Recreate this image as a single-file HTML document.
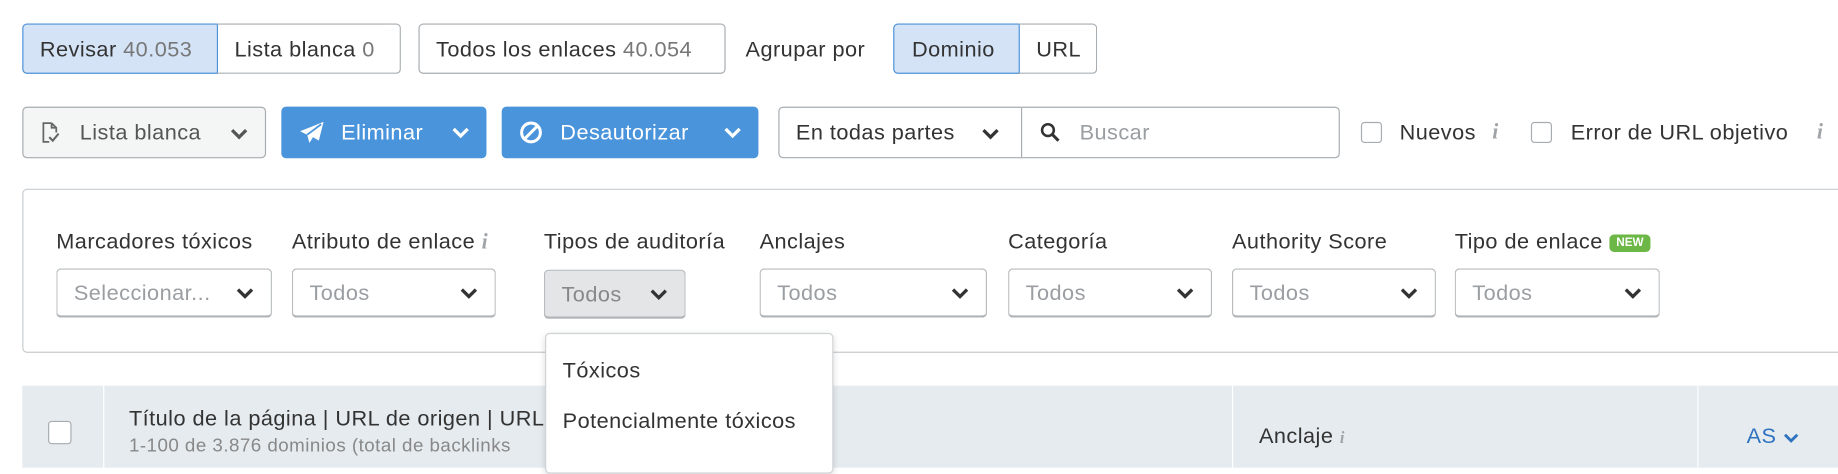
<!DOCTYPE html>
<html><head><meta charset="utf-8"><style>
*{box-sizing:border-box;margin:0;padding:0}
body{width:1838px;height:456px;overflow:hidden;background:#fff;font-family:"Liberation Sans",sans-serif;color:#333;position:relative}
#w{position:absolute;left:0;top:0;width:1568px;height:390px;transform:scale(1.1722);transform-origin:0 0;font-size:18.5px;letter-spacing:.4px}
.a{position:absolute;white-space:nowrap}
.b{position:absolute;border:1px solid #a6acb0;border-radius:4px;display:flex;align-items:center;white-space:nowrap}
.n{color:#777}
.blue{background:#4a94dc;color:#fff;border:none}
.sel{background:#d4e4f6;border-color:#4a90d9}
.lab{position:absolute;top:195px;white-space:nowrap}
.dd{position:absolute;top:229px;height:42px;border:1px solid #b7bbbe;border-radius:4px;color:#9a9ea2;padding-left:14px;display:flex;align-items:center;border-bottom:2px solid #b0b4b7}
.dd svg,.b .c{position:absolute;right:14px;top:15px}
.b .c{top:17px}
.cb{position:absolute;width:18px;height:18px;border:1px solid #a6acb0;border-radius:3px;background:#fff}
.i{color:#a0a4a8;font-family:"Liberation Serif",serif;font-style:italic;font-weight:bold}
</style></head><body>
<svg width="0" height="0" style="position:absolute"><defs><symbol id="ch" viewBox="0 0 16 10"><path d="M2 2l6 6 6-6" fill="none" stroke="currentColor" stroke-width="2.8"/></symbol></defs></svg>
<div id="w">
<div class="b sel" style="left:19px;top:20px;width:167px;height:43px;padding-left:14px;border-radius:4px 0 0 4px">Revisar&nbsp;<span class="n">40.053</span></div>
<div class="b" style="left:185px;top:20px;width:157px;height:43px;padding-left:15px;border-left:none;border-radius:0 4px 4px 0">Lista blanca&nbsp;<span class="n">0</span></div>
<div class="b" style="left:357px;top:20px;width:262px;height:43px;padding-left:14px">Todos los enlaces&nbsp;<span class="n">40.054</span></div>
<div class="a" style="left:636px;top:31px">Agrupar por</div>
<div class="b sel" style="left:762px;top:20px;width:108px;height:43px;padding-left:15px;border-radius:4px 0 0 4px">Dominio</div>
<div class="b" style="left:869px;top:20px;width:67px;height:43px;padding-left:15px;border-left:none;border-radius:0 4px 4px 0">URL</div>

<div class="b" style="left:19px;top:91px;width:208px;height:44px;background:#f4f5f5;padding-left:14px;color:#555">
<svg width="18" height="20" viewBox="0 0 18 20"><path d="M10 2H3v16h5M10 2l4 4v4M10 2v4h4" fill="none" stroke="#666" stroke-width="1.5"/><path d="M8 14l3 3 5-6" fill="none" stroke="#666" stroke-width="1.8"/></svg>
<span style="margin-left:16px">Lista blanca</span><svg class="c" width="16" height="10" style="color:#555"><use href="#ch"/></svg></div>
<div class="b blue" style="left:240px;top:91px;width:175px;height:44px;padding-left:15px">
<svg width="22" height="20" viewBox="0 0 22 20"><path d="M21 1L1 9l6 3 2 7 3-5 5 3z" fill="#fff"/><path d="M7 12L19 3" stroke="#4a94dc" stroke-width="1.5"/></svg>
<span style="margin-left:14px">Eliminar</span><svg class="c" width="16" height="10" style="color:#fff"><use href="#ch"/></svg></div>
<div class="b blue" style="left:428px;top:91px;width:219px;height:44px;padding-left:15px">
<svg width="20" height="20" viewBox="0 0 20 20"><circle cx="10" cy="10" r="8" fill="none" stroke="#fff" stroke-width="2.6"/><path d="M5 15L15 5" stroke="#fff" stroke-width="2.6"/></svg>
<span style="margin-left:15px">Desautorizar</span><svg class="c" width="16" height="10" style="color:#fff"><use href="#ch"/></svg></div>
<div class="b" style="left:664px;top:91px;width:479px;height:44px;padding-left:14px">En todas partes<svg width="16" height="10" style="position:absolute;left:172px;top:17px;color:#333"><use href="#ch"/></svg>
<div style="position:absolute;left:206px;top:0;bottom:0;border-left:1px solid #a6acb0"></div>
<svg width="18" height="18" viewBox="0 0 18 18" style="position:absolute;left:222px;top:12px"><circle cx="7" cy="7" r="5" fill="none" stroke="#333" stroke-width="2.2"/><path d="M11 11l5 5" stroke="#333" stroke-width="2.6"/></svg>
<span style="position:absolute;left:256px;color:#9a9ea2">Buscar</span></div>
<div class="cb" style="left:1161px;top:104px"></div><div class="a" style="left:1194px;top:102px">Nuevos</div><div class="a i" style="left:1273px;top:103px">i</div>
<div class="cb" style="left:1306px;top:104px"></div><div class="a" style="left:1340px;top:102px">Error de URL objetivo</div><div class="a i" style="left:1550px;top:103px">i</div>

<div style="position:absolute;left:19px;top:161px;width:1600px;height:140px;border:1px solid #c8cccf;border-radius:4px"></div>
<div class="lab" style="left:48px">Marcadores tóxicos</div>
<div class="lab" style="left:249px">Atributo de enlace <span class="i">i</span></div>
<div class="lab" style="left:464px">Tipos de auditoría</div>
<div class="lab" style="left:648px">Anclajes</div>
<div class="lab" style="left:860px">Categoría</div>
<div class="lab" style="left:1051px">Authority Score</div>
<div class="lab" style="left:1241px">Tipo de enlace <span style="display:inline-block;background:#6cb745;color:#fff;font-size:10px;font-weight:bold;padding:2px 6px;border-radius:4px;vertical-align:2px;letter-spacing:0">NEW</span></div>
<div class="dd" style="left:48px;width:184px">Seleccionar...<svg width="16" height="10" style="color:#333"><use href="#ch"/></svg></div>
<div class="dd" style="left:249px;width:174px">Todos<svg width="16" height="10" style="color:#333"><use href="#ch"/></svg></div>
<div class="dd" style="left:464px;width:121px;background:#e4e5e6;color:#888;top:230px">Todos<svg width="16" height="10" style="color:#333"><use href="#ch"/></svg></div>
<div class="dd" style="left:648px;width:194px">Todos<svg width="16" height="10" style="color:#333"><use href="#ch"/></svg></div>
<div class="dd" style="left:860px;width:174px">Todos<svg width="16" height="10" style="color:#333"><use href="#ch"/></svg></div>
<div class="dd" style="left:1051px;width:174px">Todos<svg width="16" height="10" style="color:#333"><use href="#ch"/></svg></div>
<div class="dd" style="left:1241px;width:175px">Todos<svg width="16" height="10" style="color:#333"><use href="#ch"/></svg></div>

<div style="position:absolute;left:19px;top:329px;width:1560px;height:70px;background:#e5ebef"></div>
<div style="position:absolute;left:88px;top:329px;height:70px;border-left:1px solid #fff"></div>
<div style="position:absolute;left:1051px;top:329px;height:70px;border-left:1px solid #fff"></div>
<div style="position:absolute;left:1448px;top:329px;height:70px;border-left:1px solid #fff"></div>
<div class="cb" style="left:41px;top:359px;width:20px;height:20px"></div>
<div class="a" style="left:110px;top:346px">Título de la página | URL de origen | URL</div>
<div class="a" style="left:110px;top:372px;color:#888;font-size:16px">1-100 de 3.876 dominios (total de backlinks</div>
<div class="a" style="left:1074px;top:361px">Anclaje <span class="i" style="font-size:14px">i</span></div>
<div class="a" style="left:1490px;top:361px;color:#2f73c0">AS <svg width="14" height="9" style="color:#2f73c0"><use href="#ch"/></svg></div>

<div style="position:absolute;left:465px;top:284px;width:246px;height:120px;background:#fff;border:1px solid #d0d3d6;border-radius:4px;box-shadow:0 2px 6px rgba(0,0,0,.15)"></div>
<div class="a" style="left:480px;top:305px">Tóxicos</div>
<div class="a" style="left:480px;top:348px">Potencialmente tóxicos</div>
</div>
</body></html>
